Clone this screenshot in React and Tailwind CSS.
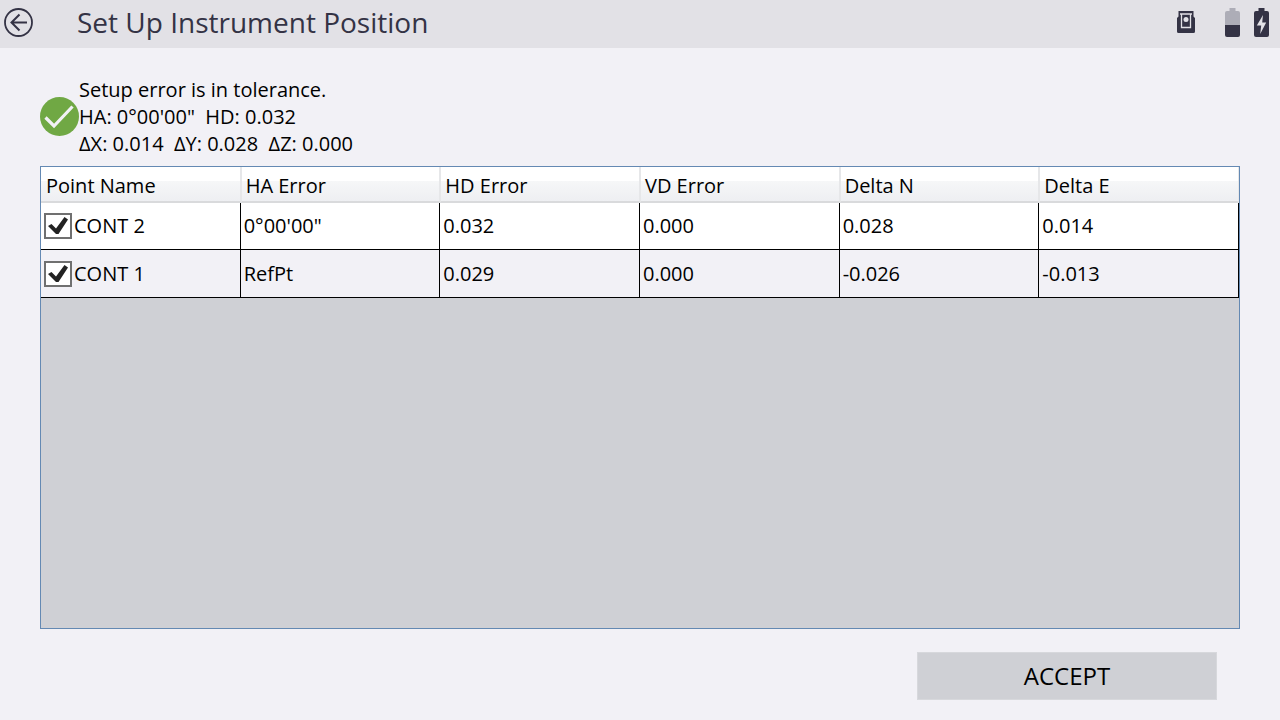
import { useState } from 'react';

const columns = ['Point Name', 'HA Error', 'HD Error', 'VD Error', 'Delta N', 'Delta E'];

const points = [
  { name: 'CONT 2', values: ['0°00\'00"', '0.032', '0.000', '0.028', '0.014'] },
  { name: 'CONT 1', values: ['RefPt', '0.029', '0.000', '-0.026', '-0.013'] },
];

function BackIcon() {
  return (
    <svg viewBox="0 0 30 30" className="size-[30px]" fill="none" stroke="currentColor" strokeWidth="2" aria-hidden="true">
      <circle cx="14.5" cy="15.5" r="13.5" strokeWidth="1.8" />
      <path d="M23 15.500H7.500M15.500 7.500l-8 8 8 8" />
    </svg>
  );
}

function InstrumentIcon() {
  return (
    <svg viewBox="0 0 18 22" className="h-[22px] w-[18px]" aria-hidden="true">
      <path d="M1.5 0h15v5.5L18 7v13.5Q18 22 16.500 22h-15Q0 22 0 20.500V7l1.500-1.500z" fill="#343345" />
      <path d="M3 3h12M4.500 3v13.500h9V3" fill="none" stroke="#e2e1e6" strokeWidth="1.300" />
      <circle cx="9" cy="8.500" r="2.500" fill="#e2e1e6" />
    </svg>
  );
}

function BatteryIcon({ charging }) {
  return (
    <svg viewBox="0 0 15 30" className="h-[30px] w-[15px]" aria-hidden="true">
      <path
        d="M4.500 1h6v3H13q2 0 2 2v12H0V6q0-2 2-2h2.500z"
        fill={charging ? '#343345' : '#adadb7'}
      />
      <path d="M0 18h15v10q0 2-2 2H2q-2 0-2-2z" fill="#343345" />
      {charging && <path d="M9 8L2.800 18.500h4.400L6.200 27l6-11.500H8.200z" fill="#e2e1e6" />}
    </svg>
  );
}

function ToleranceIcon() {
  return (
    <svg viewBox="0 0 39 39" className="size-[39px] shrink-0" aria-hidden="true">
      <circle cx="19.500" cy="19.500" r="19.500" fill="#70a844" />
      <path d="M5.500 20.500l8.500 8.500L32.500 9.500" fill="none" stroke="#f2f1f6" strokeWidth="3.200" />
    </svg>
  );
}

function PointCheckbox({ name, checked, onChange }) {
  return (
    <label className="flex items-center gap-0.5">
      <span className="grid">
        <input
          type="checkbox"
          checked={checked}
          onChange={onChange}
          className="col-start-1 row-start-1 h-[26px] w-7 appearance-none border-2 border-[#707070] bg-white"
        />
        {checked && (
          <svg viewBox="0 0 28 26" className="pointer-events-none col-start-1 row-start-1 h-[26px] w-7" aria-hidden="true">
            <path d="M4 13l3.500-2 4.500 4.500L20.500 4l3.500 2.500L14.500 21H12z" fill="#222222" />
          </svg>
        )}
      </span>
      {name}
    </label>
  );
}

function App() {
  const [selected, setSelected] = useState({ 'CONT 2': true, 'CONT 1': true });

  const toggle = (name) => {
    setSelected(prev => ({ ...prev, [name]: !prev[name] }));
  };

  return (
    <div className="flex min-h-screen flex-col bg-[#f2f1f6] font-['Open_Sans',sans-serif] text-xl text-black">
      <header className="flex h-12 items-center bg-[#e2e1e6] pr-[11px] pb-1 pl-1 text-[#343345]">
        <button type="button" aria-label="Back">
          <BackIcon />
        </button>
        <h1 className="ml-[43px] text-[28px] leading-10">Set Up Instrument Position</h1>
        <div className="ml-auto flex items-center">
          <InstrumentIcon />
          <div className="ml-[30px] flex gap-3.5">
            <BatteryIcon />
            <BatteryIcon charging />
          </div>
        </div>
      </header>

      <main className="flex grow flex-col px-10 pt-7 pb-5">
        <div className="flex items-center pb-[9px]">
          <ToleranceIcon />
          <div className="leading-[27px] whitespace-pre-wrap">
            <p>Setup error is in tolerance.</p>
            <p>{'HA: 0°00\'00"  HD: 0.032'}</p>
            <p>{'ΔX: 0.014  ΔY: 0.028  ΔZ: 0.000'}</p>
          </div>
        </div>

        <div className="grow border border-[#6489b3] bg-[#cfd0d5]">
          <table className="w-full table-fixed border-separate border-spacing-0 text-left">
            <thead>
              <tr>
                {columns.map((column) => (
                  <th
                    key={column}
                    className="h-9 border-r border-b-2 border-r-[#e6e7e9] border-b-[#d9dadc] bg-linear-to-b from-white from-40% via-[#f6f7f8] via-40% to-[#eeeff2] px-1 pt-1 pb-0 font-normal not-first:border-l not-first:border-l-[#e6e7e9] first:pl-[5px]"
                  >
                    {column}
                  </th>
                ))}
              </tr>
            </thead>
            <tbody>
              {points.map((point) => (
                <tr key={point.name} className="h-[47px] bg-white last:h-12 even:bg-[#f2f1f6]">
                  <td className="border-r border-b border-black px-[3px] py-0">
                    <PointCheckbox
                      name={point.name}
                      checked={selected[point.name]}
                      onChange={() => toggle(point.name)}
                    />
                  </td>
                  {point.values.map((value, i) => (
                    <td key={columns[i + 1]} className="border-r border-b border-black px-[3px] py-0">
                      {value}
                    </td>
                  ))}
                </tr>
              ))}
            </tbody>
          </table>
        </div>

        <button
          type="button"
          className="mt-[23px] mr-[23px] h-12 w-[300px] self-end border border-[#d7d8dc] bg-[#cfd0d5] text-2xl"
        >
          ACCEPT
        </button>
      </main>
    </div>
  );
}

export default App;
